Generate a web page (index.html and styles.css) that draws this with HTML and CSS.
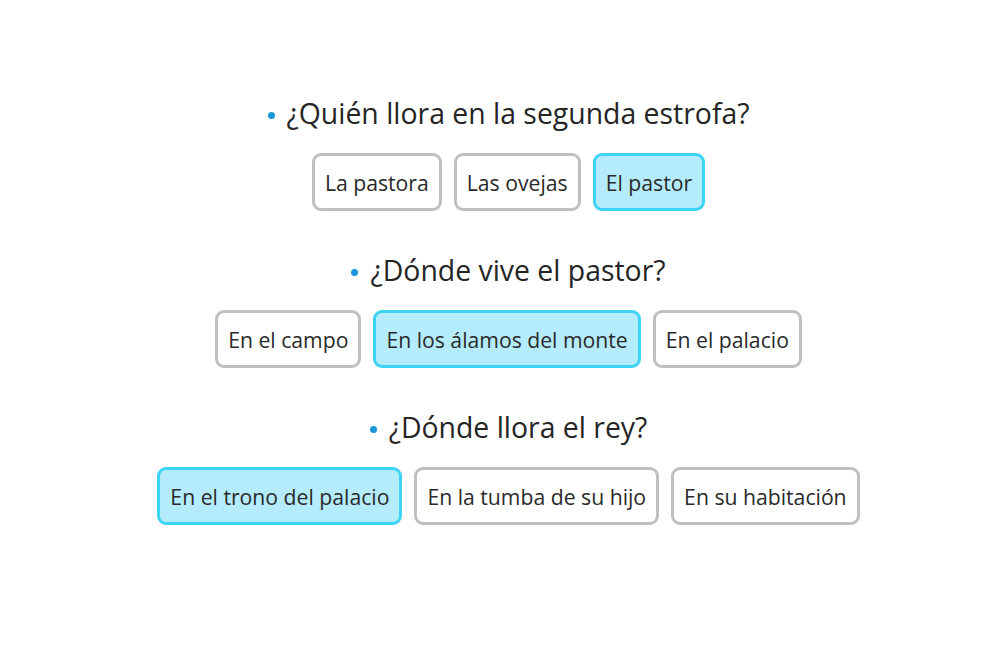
FILE: index.html
```html
<!DOCTYPE html>
<html lang="es">
<head>
<meta charset="utf-8">
<link rel="stylesheet" href="styles.css">
</head>
<body>
<main class="quiz">
  <section class="question">
    <h2 class="title"><span class="dot"></span>¿Quién llora en la segunda estrofa?</h2>
    <div class="options">
      <button class="opt">La pastora</button>
      <button class="opt">Las ovejas</button>
      <button class="opt selected">El pastor</button>
    </div>
  </section>
  <section class="question">
    <h2 class="title"><span class="dot"></span>¿Dónde vive el pastor?</h2>
    <div class="options">
      <button class="opt">En el campo</button>
      <button class="opt selected">En los álamos del monte</button>
      <button class="opt">En el palacio</button>
    </div>
  </section>
  <section class="question">
    <h2 class="title"><span class="dot"></span>¿Dónde llora el rey?</h2>
    <div class="options">
      <button class="opt selected">En el trono del palacio</button>
      <button class="opt">En la tumba de su hijo</button>
      <button class="opt">En su habitación</button>
    </div>
  </section>
</main>
</body>
</html>
```
FILE: styles.css
```css
html, body {
  margin: 0;
  padding: 0;
  background: #ffffff;
}
body {
  font-family: "Open Sans", "Noto Sans", sans-serif;
  color: #252525;
}
.quiz {
  display: flex;
  flex-direction: column;
  align-items: center;
  padding-top: 95px;
  padding-left: 20px;
  gap: 41px;
}
.question {
  display: flex;
  flex-direction: column;
  align-items: center;
  gap: 22px;
}
.title {
  margin: 0;
  font-size: 28.4px;
  font-weight: 400;
  line-height: 36px;
  display: flex;
  align-items: center;
  gap: 12px;
}
.dot {
  width: 7px;
  height: 7px;
  border-radius: 50%;
  background: #1a96d8;
  margin-top: 4px;
}
.options {
  display: flex;
  gap: 12px;
}
.opt {
  font-family: inherit;
  font-size: 21.2px;
  color: #2a2a2a;
  height: 58px;
  padding: 0 10px;
  border: 3px solid #c0c0c0;
  border-radius: 9px;
  background: #ffffff;
  cursor: pointer;
}
.opt.selected {
  background: #b5ecfd;
  border-color: #3dd3f4;
}
```
